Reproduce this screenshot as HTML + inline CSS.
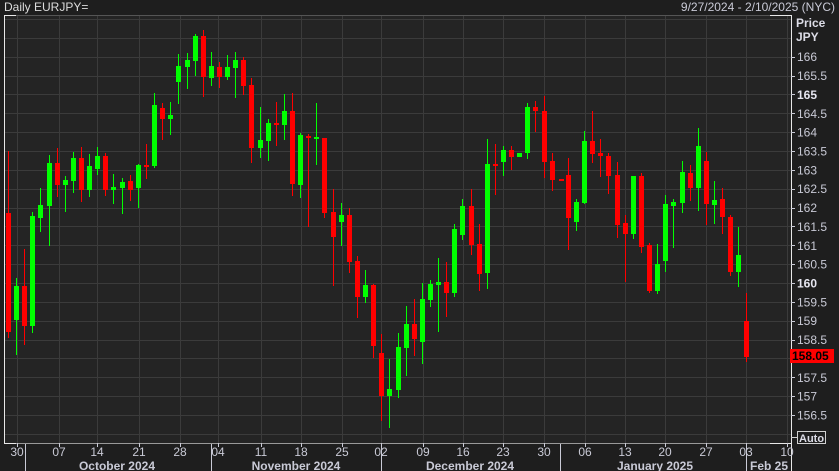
<!DOCTYPE html>
<html><head><meta charset="utf-8"><style>
html,body{margin:0;padding:0;background:#1e1e1e;}
svg{display:block;font-family:"Liberation Sans",sans-serif;}
</style></head><body>
<svg width="839" height="471" viewBox="0 0 839 471" xmlns="http://www.w3.org/2000/svg">
<rect x="0" y="0" width="839" height="471" fill="#1e1e1e"/>
<rect x="4" y="15" width="787" height="428" fill="#242424"/>
<g id="grid" stroke="#3b3b3b" stroke-width="1"></g>
<!-- frame -->
<line x1="4.5" y1="15" x2="4.5" y2="443" stroke="#e8e8e8"/>
<line x1="4" y1="15.5" x2="791" y2="15.5" stroke="#555"/>
<line x1="4" y1="15.5" x2="16" y2="15.5" stroke="#e8e8e8"/>
<line x1="770" y1="15.5" x2="791" y2="15.5" stroke="#e8e8e8"/>
<line x1="4" y1="443.5" x2="791" y2="443.5" stroke="#999"/>
<line x1="4" y1="443.5" x2="16" y2="443.5" stroke="#e8e8e8"/>
<line x1="770" y1="443.5" x2="791" y2="443.5" stroke="#e8e8e8"/>
<line x1="791.5" y1="15" x2="791.5" y2="471" stroke="#e8e8e8"/>
<g id="candles"></g>
<g id="yax" fill="#c9cad6" font-size="12"></g>
<g id="xax" fill="#c9cad6" font-size="12"></g>
<text x="4" y="11" fill="#dcdcdc" font-size="12">Daily EURJPY=</text>
<text x="835" y="11" fill="#c9cad6" font-size="12" text-anchor="end">9/27/2024 - 2/10/2025 (NYC)</text>
<text x="796" y="27" fill="#dcdce6" font-size="12" font-weight="bold">Price</text>
<text x="796" y="41" fill="#dcdce6" font-size="12" font-weight="bold">JPY</text>
<rect x="790" y="349" width="44" height="14" fill="#ff0000"/>
<text x="792" y="360" fill="#000" font-size="12" font-weight="bold">158.05</text>
<rect x="797.5" y="431.5" width="28" height="12" fill="none" stroke="#d0d0d0"/>
<line x1="791" y1="437.5" x2="797" y2="437.5" stroke="#d0d0d0"/>
<text x="799" y="442" fill="#dcdce6" font-size="11" font-weight="bold">Auto</text>
</svg>
<script>
var NS="http://www.w3.org/2000/svg";
function el(p,t,a,txt){var e=document.createElementNS(NS,t);for(var k in a)e.setAttribute(k,a[k]);if(txt!==undefined)e.textContent=txt;p.appendChild(e);return e;}
var grid=document.getElementById('grid');
function py(p){return 283-(p-160)*37.72;}
for(var p=156;p<=167.01;p+=0.5){var y=Math.round(py(p))+0.5;el(grid,'line',{x1:4,y1:y,x2:791,y2:y});}
var xs=[17,59,97,139,180,218,261,301,342,381,423,463,503,544,585,625,665,706,746,787];
var lb=["30","07","14","21","28","04","11","18","25","02","09","16","23","30","06","13","20","27","03","10"];
xs.forEach(function(x){if(x<790)el(grid,'line',{x1:x+0.5,y1:15,x2:x+0.5,y2:443});});
var C=[
[8,151,338,213,332,'r'],[16,278,355,286,320,'g'],[24,249,345,286,326,'r'],[32,212,333,216,326,'g'],
[40,188,232,205,218,'g'],[49,155,246,163,206,'g'],[57,148,197,163,185,'r'],[65,176,212,180,185,'g'],
[73,152,193,158,181,'g'],[81,147,202,158,190,'r'],[89,154,197,166,190,'g'],[97,147,175,156,169,'g'],
[105,153,196,156,190,'r'],[113,174,204,187,190,'g'],[122,178,214,182,188,'g'],[130,175,201,181,190,'r'],
[138,164,208,165,188,'g'],[146,144,179,165,166,'r'],[154,93,168,105,166,'g'],[162,103,140,108,119,'r'],
[170,102,135,115,119,'g'],[178,54,104,66,82,'g'],[187,53,89,60,67,'g'],[195,34,76,36,61,'g'],
[203,30,97,36,77,'r'],[211,52,86,66,78,'g'],[219,62,88,67,77,'r'],[227,55,80,67,77,'g'],
[235,52,98,60,68,'g'],[243,57,95,60,86,'r'],[251,78,163,85,148,'r'],[260,107,158,140,148,'g'],
[268,119,161,123,141,'g'],[276,102,146,123,125,'r'],[284,94,140,111,125,'g'],[292,93,196,111,184,'r'],
[300,133,198,135,185,'g'],[308,134,227,136,138,'r'],[316,103,165,137,139,'g'],[324,138,218,138,213,'r'],
[333,189,286,212,237,'r'],[341,203,246,215,222,'g'],[349,208,273,215,262,'r'],[357,256,318,261,297,'r'],
[365,270,303,285,297,'g'],[373,284,358,285,346,'r'],[381,334,421,353,396,'r'],[389,359,428,389,396,'g'],
[398,333,398,347,390,'g'],[406,306,376,324,348,'g'],[414,299,356,324,339,'r'],[422,283,364,299,342,'g'],
[430,280,307,284,300,'g'],[438,258,332,282,285,'g'],[446,262,317,282,293,'r'],[454,224,297,229,293,'g'],
[462,199,240,206,235,'g'],[471,189,255,206,245,'r'],[479,224,291,244,274,'r'],[487,139,289,164,273,'g'],
[495,144,195,164,166,'r'],[503,146,176,150,162,'g'],[511,146,170,150,157,'r'],[519,153,157,153,157,'g'],
[527,103,159,107,153,'g'],[535,101,132,107,111,'r'],[544,96,178,111,162,'r'],[552,153,191,161,180,'r'],
[561,179,180,179,180,'r'],[568,158,250,175,218,'r'],[576,199,231,202,222,'g'],[584,131,204,141,203,'g'],
[592,111,163,141,154,'r'],[600,139,177,153,156,'r'],[608,153,194,156,176,'r'],[617,162,238,175,225,'r'],
[625,215,282,223,234,'r'],[633,176,239,176,234,'g'],[641,173,253,176,247,'r'],[649,243,293,245,291,'r'],
[657,244,294,264,291,'g'],[665,195,272,204,261,'g'],[673,199,248,202,206,'g'],[682,161,213,172,203,'g'],
[690,165,201,173,188,'r'],[698,128,211,146,188,'g'],[706,152,225,161,204,'r'],[714,181,224,200,205,'g'],
[722,188,234,199,217,'r'],[730,215,276,217,272,'r'],[738,227,287,255,272,'g'],[746,293,362,321,357,'r']];
var cg=document.getElementById('candles');
C.forEach(function(c){var col=c[5]=='r'?'#ff0000':'#00ff00';
el(cg,'rect',{x:c[0],y:c[1],width:1,height:c[2]-c[1],fill:col});
el(cg,'rect',{x:c[0]-2,y:c[3],width:5,height:Math.max(2,c[4]-c[3]),fill:col});});
var ya=document.getElementById('yax');
for(var p=156.5;p<=166.01;p+=0.5){var y=py(p);
el(ya,'line',{x1:791,y1:Math.round(y)+0.5,x2:795,y2:Math.round(y)+0.5,stroke:'#c9cad6'});
var s=(p%1==0)?String(p):p.toFixed(1);var b=(p==165||p==160);
var t=el(ya,'text',{x:797,y:y+4.5},s);if(b){t.setAttribute('font-weight','bold');t.setAttribute('fill','#e6e6f0');}}
var xa=document.getElementById('xax');
xs.forEach(function(x,i){el(xa,'line',{x1:x+0.5,y1:443,x2:x+0.5,y2:447,stroke:'#c9cad6'});
el(xa,'text',{x:x,y:456,'text-anchor':'middle'},lb[i]);});
[25,211,381,560,746].forEach(function(x){el(xa,'line',{x1:x+0.5,y1:444,x2:x+0.5,y2:471,stroke:'#c9cad6'});});
[["October 2024",117],["November 2024",296],["December 2024",470],["January 2025",655],["Feb 25",769]].forEach(function(m){
el(xa,'text',{x:m[1],y:470,'text-anchor':'middle','font-weight':'bold'},m[0]);});
</script>
</body></html>
